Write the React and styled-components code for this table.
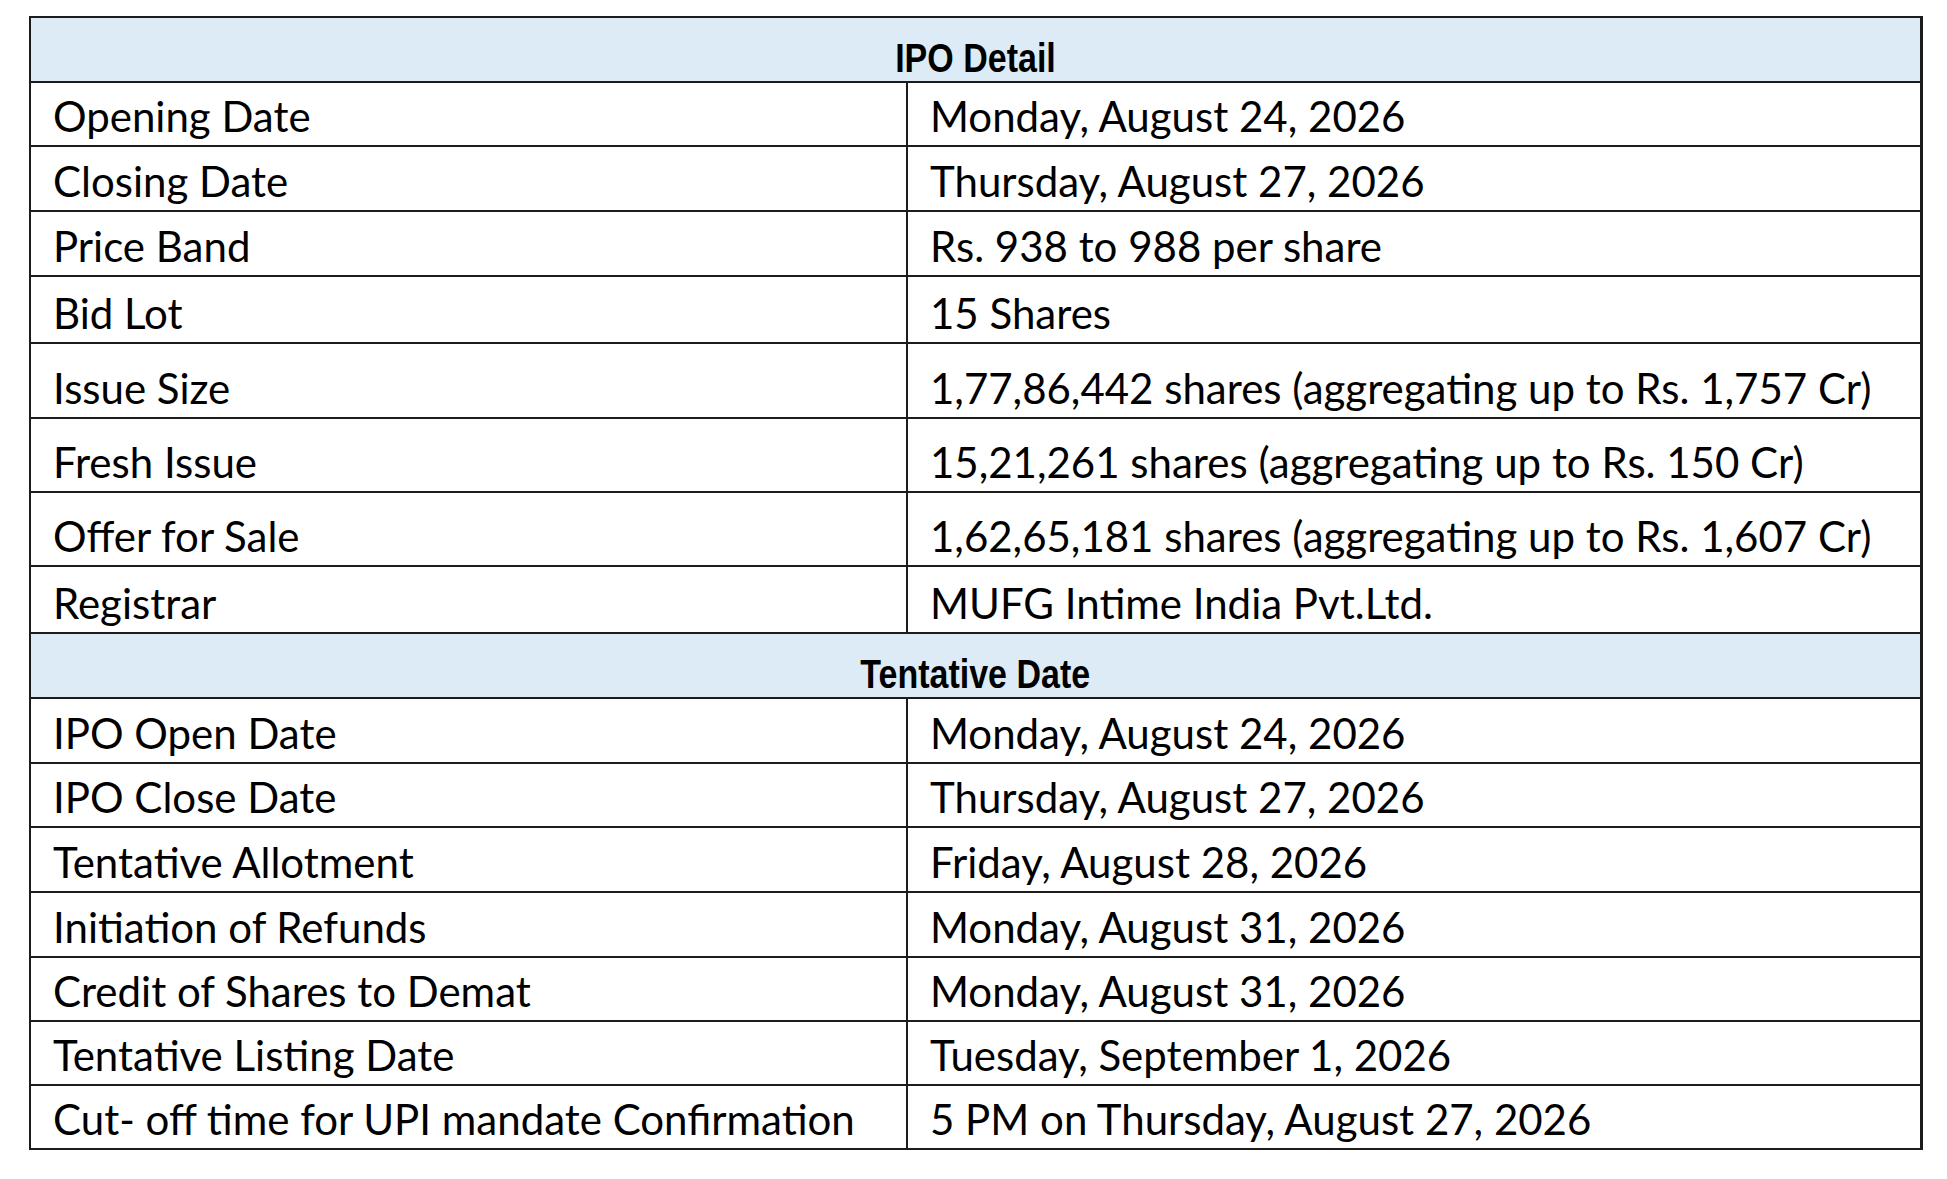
import React from "react";
import styled, { createGlobalStyle } from "styled-components";

const GlobalStyle = createGlobalStyle`
  html, body {
    margin: 0;
    padding: 0;
    background: #ffffff;
  }
  body {
    font-family: Lato, "Open Sans", sans-serif;
    color: #000000;
  }
`;

const Page = styled.div`
  width: 1947px;
  height: 1179px;
  padding: 16px 0 0 29px;
  box-sizing: border-box;
`;

const Table = styled.div`
  width: 1894px;
  border: 2px solid #1c1c1c;
  border-right-width: 3px;
  box-sizing: border-box;
  display: flex;
  flex-direction: column;
`;

const HeaderRow = styled.div`
  height: ${(p) => p.$h}px;
  box-sizing: border-box;
  border-top: ${(p) => (p.$first ? "none" : "2px solid #1c1c1c")};
  background: #ddebf7;
  display: flex;
  align-items: flex-end;
  justify-content: center;
  padding-bottom: 3px;
`;

// narrow bold face, squeezed from Liberation Sans
const HeaderText = styled.span`
  display: inline-block;
  font-family: "Liberation Sans", Arial, sans-serif;
  font-weight: 700;
  font-size: 40px;
  line-height: 1;
  transform: scaleX(0.85);
`;

const Row = styled.div`
  height: ${(p) => p.$h}px;
  box-sizing: border-box;
  border-top: 2px solid #1c1c1c;
  display: grid;
  grid-template-columns: 877px 1fr;
`;

const Cell = styled.div`
  display: flex;
  align-items: flex-end;
  padding: 0 0 8px 22px;
  border-right: ${(p) => (p.$label ? "2px solid #1c1c1c" : "none")};
  font-size: 42px;
  line-height: 1;
  white-space: nowrap;
`;

const ipoDetail = [
  ["Opening Date", "Monday, August 24, 2026", 64],
  ["Closing Date", "Thursday, August 27, 2026", 65],
  ["Price Band", "Rs. 938 to 988 per share", 65],
  ["Bid Lot", "15 Shares", 67],
  ["Issue Size", "1,77,86,442 shares (aggregating up to Rs. 1,757 Cr)", 75],
  ["Fresh Issue", "15,21,261 shares (aggregating up to Rs. 150 Cr)", 74],
  ["Offer for Sale", "1,62,65,181 shares (aggregating up to Rs. 1,607 Cr)", 74],
  ["Registrar", "MUFG Intime India Pvt.Ltd.", 67],
];

const tentative = [
  ["IPO Open Date", "Monday, August 24, 2026", 65],
  ["IPO Close Date", "Thursday, August 27, 2026", 64],
  ["Tentative Allotment", "Friday, August 28, 2026", 65],
  ["Initiation of Refunds", "Monday, August 31, 2026", 65],
  ["Credit of Shares to Demat", "Monday, August 31, 2026", 64],
  ["Tentative Listing Date", "Tuesday, September 1, 2026", 64],
  ["Cut- off time for UPI mandate Confirmation", "5 PM on Thursday, August 27, 2026", 64],
];

function Rows({ items }) {
  return items.map(([label, value, h]) => (
    <Row key={label} $h={h}>
      <Cell $label>{label}</Cell>
      <Cell>{value}</Cell>
    </Row>
  ));
}

export default function App() {
  return (
    <Page>
      <GlobalStyle />
      <Table>
        <HeaderRow $first $h={63}>
          <HeaderText>IPO Detail</HeaderText>
        </HeaderRow>
        <Rows items={ipoDetail} />
        <HeaderRow $h={65}>
          <HeaderText>Tentative Date</HeaderText>
        </HeaderRow>
        <Rows items={tentative} />
      </Table>
    </Page>
  );
}
